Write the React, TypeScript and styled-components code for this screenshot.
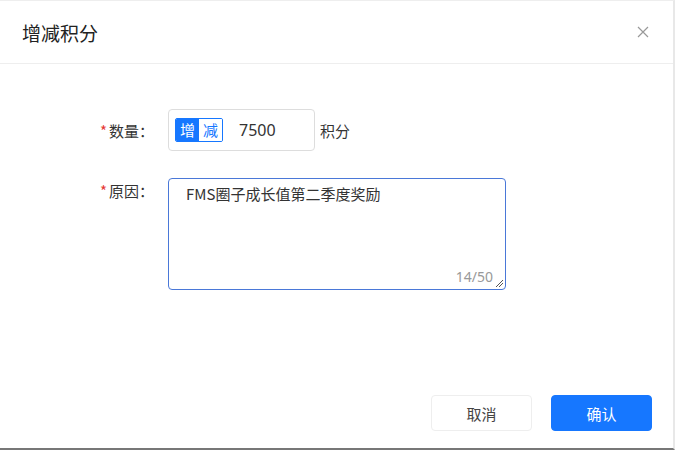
import React from "react";
import styled, { createGlobalStyle } from "styled-components";

const G = createGlobalStyle`
  html,body{margin:0;padding:0;background:#fff;}
  body{font-family:"Noto Sans CJK SC","Noto Sans",sans-serif;}
`;
const Dialog = styled.div`
  width:675px;height:450px;box-sizing:border-box;display:flex;flex-direction:column;
  border-right:2px solid #e8e8e8;border-top:1px solid #eee;border-bottom:2px solid #777;
`;
const Header = styled.div`
  height:63px;box-sizing:border-box;border-bottom:1px solid #eee;display:flex;align-items:center;
  justify-content:space-between;padding:0 24px 0 22px;font-size:19px;color:#222;
`;
const Body = styled.div`flex:1;padding:45px 0 0 100px;display:flex;flex-direction:column;gap:27px;`;
const Row = styled.div`display:flex;align-items:flex-start;font-size:15px;color:#333;`;
const Label = styled.div<{ $h: number }>`width:68px;height:${p => p.$h}px;display:flex;align-items:center;
  span{color:#e53935;margin-right:2px;}`;
const NumBox = styled.div`width:147px;height:42px;box-sizing:border-box;border:1px solid #ddd;border-radius:4px;
  display:flex;align-items:center;padding-left:6px;`;
const Toggle = styled.div`display:flex;border:1px solid #1677ff;border-radius:2px;overflow:hidden;font-size:15px;`;
const Seg = styled.div<{ $on?: boolean }>`width:23px;text-align:center;height:22px;line-height:22px;
  background:${p => p.$on ? "#1677ff" : "#fff"};color:${p => p.$on ? "#fff" : "#1677ff"};`;
const Num = styled.div`margin-left:16px;font-size:16px;font-family:"Noto Sans",sans-serif;`;
const Unit = styled.div`height:42px;display:flex;align-items:center;margin-left:5px;`;
const Area = styled.div`position:relative;width:338px;height:112px;box-sizing:border-box;border:1px solid #4a78d8;
  border-radius:4px;padding:4px 17px;font-size:15px;`;
const Count = styled.div`position:absolute;right:12px;bottom:3px;color:#999;font-size:14px;font-family:"Noto Sans",sans-serif;`;
const Grip = styled.svg`position:absolute;right:1px;bottom:1px;`;
const Footer = styled.div`display:flex;justify-content:flex-end;gap:19px;padding:0 21px 17px 0;`;
const Btn = styled.div<{ $primary?: boolean }>`width:101px;height:36px;border-radius:4px;display:flex;align-items:center;
  justify-content:center;font-size:15px;box-sizing:border-box;
  background:${p => p.$primary ? "#1677ff" : "#fff"};color:${p => p.$primary ? "#fff" : "#444"};
  border:1px solid ${p => p.$primary ? "#1677ff" : "#eee"};`;

export default function App() {
  return (<><G /><Dialog>
    <Header>增减积分
      <svg width="12" height="12" viewBox="0 0 12 12"><path d="M1 1L11 11M11 1L1 11" stroke="#999" strokeWidth="1.2" /></svg>
    </Header>
    <Body>
      <Row><Label $h={42}><span>*</span>数量：</Label>
        <NumBox><Toggle><Seg $on>增</Seg><Seg>减</Seg></Toggle><Num>7500</Num></NumBox>
        <Unit>积分</Unit></Row>
      <Row><Label $h={24}><span>*</span>原因：</Label>
        <Area>FMS圈子成长值第二季度奖励<Count>14/50</Count>
          <Grip width="9" height="9" viewBox="0 0 9 9"><path d="M1 8L8 1M4 8L8 4" stroke="#555" strokeWidth="1" /></Grip>
        </Area></Row>
    </Body>
    <Footer><Btn>取消</Btn><Btn $primary>确认</Btn></Footer>
  </Dialog></>);
}
